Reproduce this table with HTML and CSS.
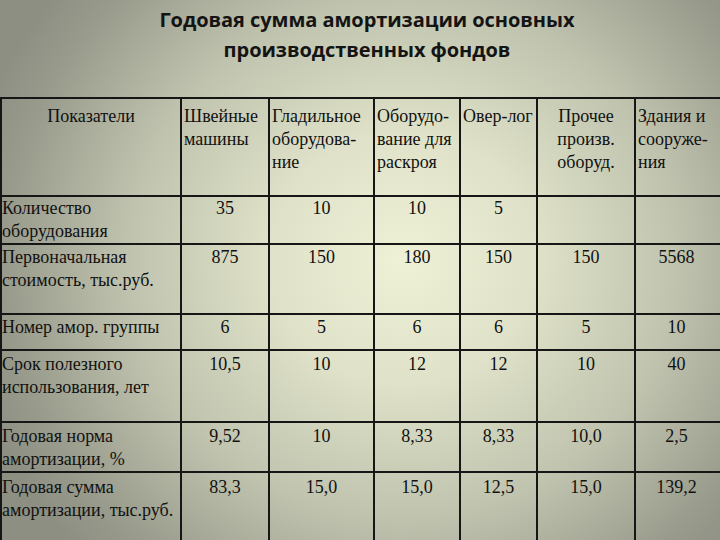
FILE: index.html
```html
<!DOCTYPE html>
<html lang="ru">
<head>
<meta charset="utf-8">
<title>Годовая сумма амортизации</title>
<link rel="stylesheet" href="styles.css">
</head>
<body>
<div class="slide">
  <h1 class="title">Годовая сумма амортизации основных<br>производственных фондов</h1>
  <table class="grid">
    <colgroup>
      <col class="c1"><col class="c2"><col class="c3"><col class="c4"><col class="c5"><col class="c6"><col class="c7">
    </colgroup>
    <tr class="r-head">
      <td class="center">Показатели</td>
      <td class="left">Швейные<br>машины</td>
      <td class="left">Гладильное<br>оборудова-<br>ние</td>
      <td class="left">Оборудо-<br>вание для<br>раскроя</td>
      <td class="left">Овер-лог</td>
      <td class="center">Прочее<br>произв.<br>оборуд.</td>
      <td class="left">Здания и<br>сооруже-<br>ния</td>
    </tr>
    <tr class="r1">
      <td class="label">Количество<br>оборудования</td>
      <td>35</td><td>10</td><td>10</td><td>5</td><td></td><td></td>
    </tr>
    <tr class="r2">
      <td class="label">Первоначальная<br>стоимость, тыс.руб.</td>
      <td>875</td><td>150</td><td>180</td><td>150</td><td>150</td><td class="last">5568</td>
    </tr>
    <tr class="r3">
      <td class="label">Номер амор. группы</td>
      <td>6</td><td>5</td><td>6</td><td>6</td><td>5</td><td class="last">10</td>
    </tr>
    <tr class="r4">
      <td class="label">Срок полезного<br>использования, лет</td>
      <td>10,5</td><td>10</td><td>12</td><td>12</td><td>10</td><td class="last">40</td>
    </tr>
    <tr class="r5">
      <td class="label">Годовая норма<br>амортизации, %</td>
      <td>9,52</td><td>10</td><td>8,33</td><td>8,33</td><td>10,0</td><td class="last">2,5</td>
    </tr>
    <tr class="r6">
      <td class="label">Годовая сумма<br>амортизации, тыс.руб.</td>
      <td>83,3</td><td>15,0</td><td>15,0</td><td>12,5</td><td>15,0</td><td class="last">139,2</td>
    </tr>
  </table>
</div>
</body>
</html>
```

FILE: styles.css
```css
html, body {
  margin: 0;
  padding: 0;
}
body {
  width: 720px;
  height: 540px;
  overflow: hidden;
}
.slide {
  width: 720px;
  height: 540px;
  overflow: hidden;
  background: radial-gradient(ellipse 62% 78% at 56% 48%, #eef1d6 0%, #dfe2c8 30%, #bfc2ad 62%, #9a9d8d 88%, #8c8f82 100%);
}
.title {
  margin: 0;
  height: 97px;
  box-sizing: border-box;
  padding: 5px 0 0 14px;
  text-align: center;
  font-family: "Open Sans", "Noto Sans", sans-serif;
  font-weight: 700;
  font-size: 20px;
  line-height: 30px;
  letter-spacing: -0.05px;
  color: #141414;
}
.grid {
  border-collapse: collapse;
  table-layout: fixed;
  width: 734px;
  margin-left: 0;
  font-family: "Liberation Serif", "Times New Roman", serif;
  font-size: 18px;
  line-height: 23px;
  color: #111;
}
.c1 { width: 180px; }
.c2 { width: 88px; }
.c3 { width: 105px; }
.c4 { width: 86px; }
.c5 { width: 77px; }
.c6 { width: 98px; }
.c7 { width: 100px; }
.grid td {
  border: 2px solid #161616;
  vertical-align: top;
  text-align: center;
  padding: 2px 0 0 0;
  white-space: nowrap;
  overflow: hidden;
}
.grid td:last-child {
  border-right: none;
}
.grid tr:last-child td {
  border-bottom: none;
}
.grid td.left {
  text-align: left;
  padding-left: 2px;
}
.grid td.center {
  text-align: center;
}
.grid td.label {
  text-align: left;
  padding-left: 0;
}
.grid td.last {
  padding-right: 18px;
}
.r-head td { height: 90px; padding-top: 6px; }
.r1 td { height: 44px; padding-top: 0; }
.r2 td { height: 67px; padding-top: 1px; }
.r3 td { height: 33px; padding-top: 1px; }
.r4 td { height: 68px; padding-top: 2px; }
.r5 td { height: 45px; padding-top: 2px; }
.r6 td { height: 80px; padding-top: 3px; }
```
